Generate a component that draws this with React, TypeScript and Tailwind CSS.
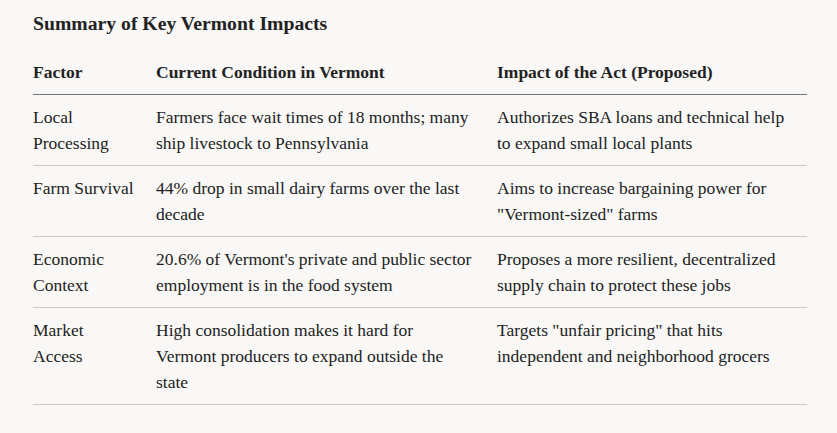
import React from 'react';

// each cell is written as its visual lines, so the wrapping follows the original
const rows: string[][][] = [
  [
    ['Local', 'Processing'],
    ['Farmers face wait times of 18 months; many', 'ship livestock to Pennsylvania'],
    ['Authorizes SBA loans and technical help', 'to expand small local plants'],
  ],
  [
    ['Farm Survival'],
    ['44% drop in small dairy farms over the last', 'decade'],
    ['Aims to increase bargaining power for', '"Vermont-sized" farms'],
  ],
  [
    ['Economic', 'Context'],
    ["20.6% of Vermont's private and public sector", 'employment is in the food system'],
    ['Proposes a more resilient, decentralized', 'supply chain to protect these jobs'],
  ],
  [
    ['Market', 'Access'],
    ['High consolidation makes it hard for', 'Vermont producers to expand outside the', 'state'],
    ['Targets "unfair pricing" that hits', 'independent and neighborhood grocers'],
  ],
];

function Lines({ lines }: { lines: string[] }) {
  return (
    <>
      {lines.map((l, i) => (
        <span key={i} className="block whitespace-nowrap">
          {l}
        </span>
      ))}
    </>
  );
}

export default function App() {
  return (
    <div className="min-h-[433px] w-full bg-[#f9f8f6] text-[#222] font-['Liberation_Serif',serif]">
      <div className="pl-[33px] pr-[30px] pt-[10px]">
        <h2 className="text-[19.7px] font-bold leading-[26px]">Summary of Key Vermont Impacts</h2>

        <table className="mt-[23px] w-[774px] table-fixed border-collapse text-[17.5px] leading-[26px]">
          <colgroup>
            <col className="w-[123px]" />
            <col className="w-[341px]" />
            <col className="w-[310px]" />
          </colgroup>
          <thead>
            <tr className="border-b border-[#777]">
              <th className="pb-[9px] text-left align-top font-bold">Factor</th>
              <th className="pb-[9px] text-left align-top font-bold">Current Condition in Vermont</th>
              <th className="pb-[9px] text-left align-top font-bold">Impact of the Act (Proposed)</th>
            </tr>
          </thead>
          <tbody>
            {rows.map((r, i) => (
              <tr key={i} className="border-b border-[#c9c8c5]">
                {r.map((cell, j) => (
                  <td key={j} className="py-[9px] align-top">
                    <Lines lines={cell} />
                  </td>
                ))}
              </tr>
            ))}
          </tbody>
        </table>
      </div>
    </div>
  );
}
